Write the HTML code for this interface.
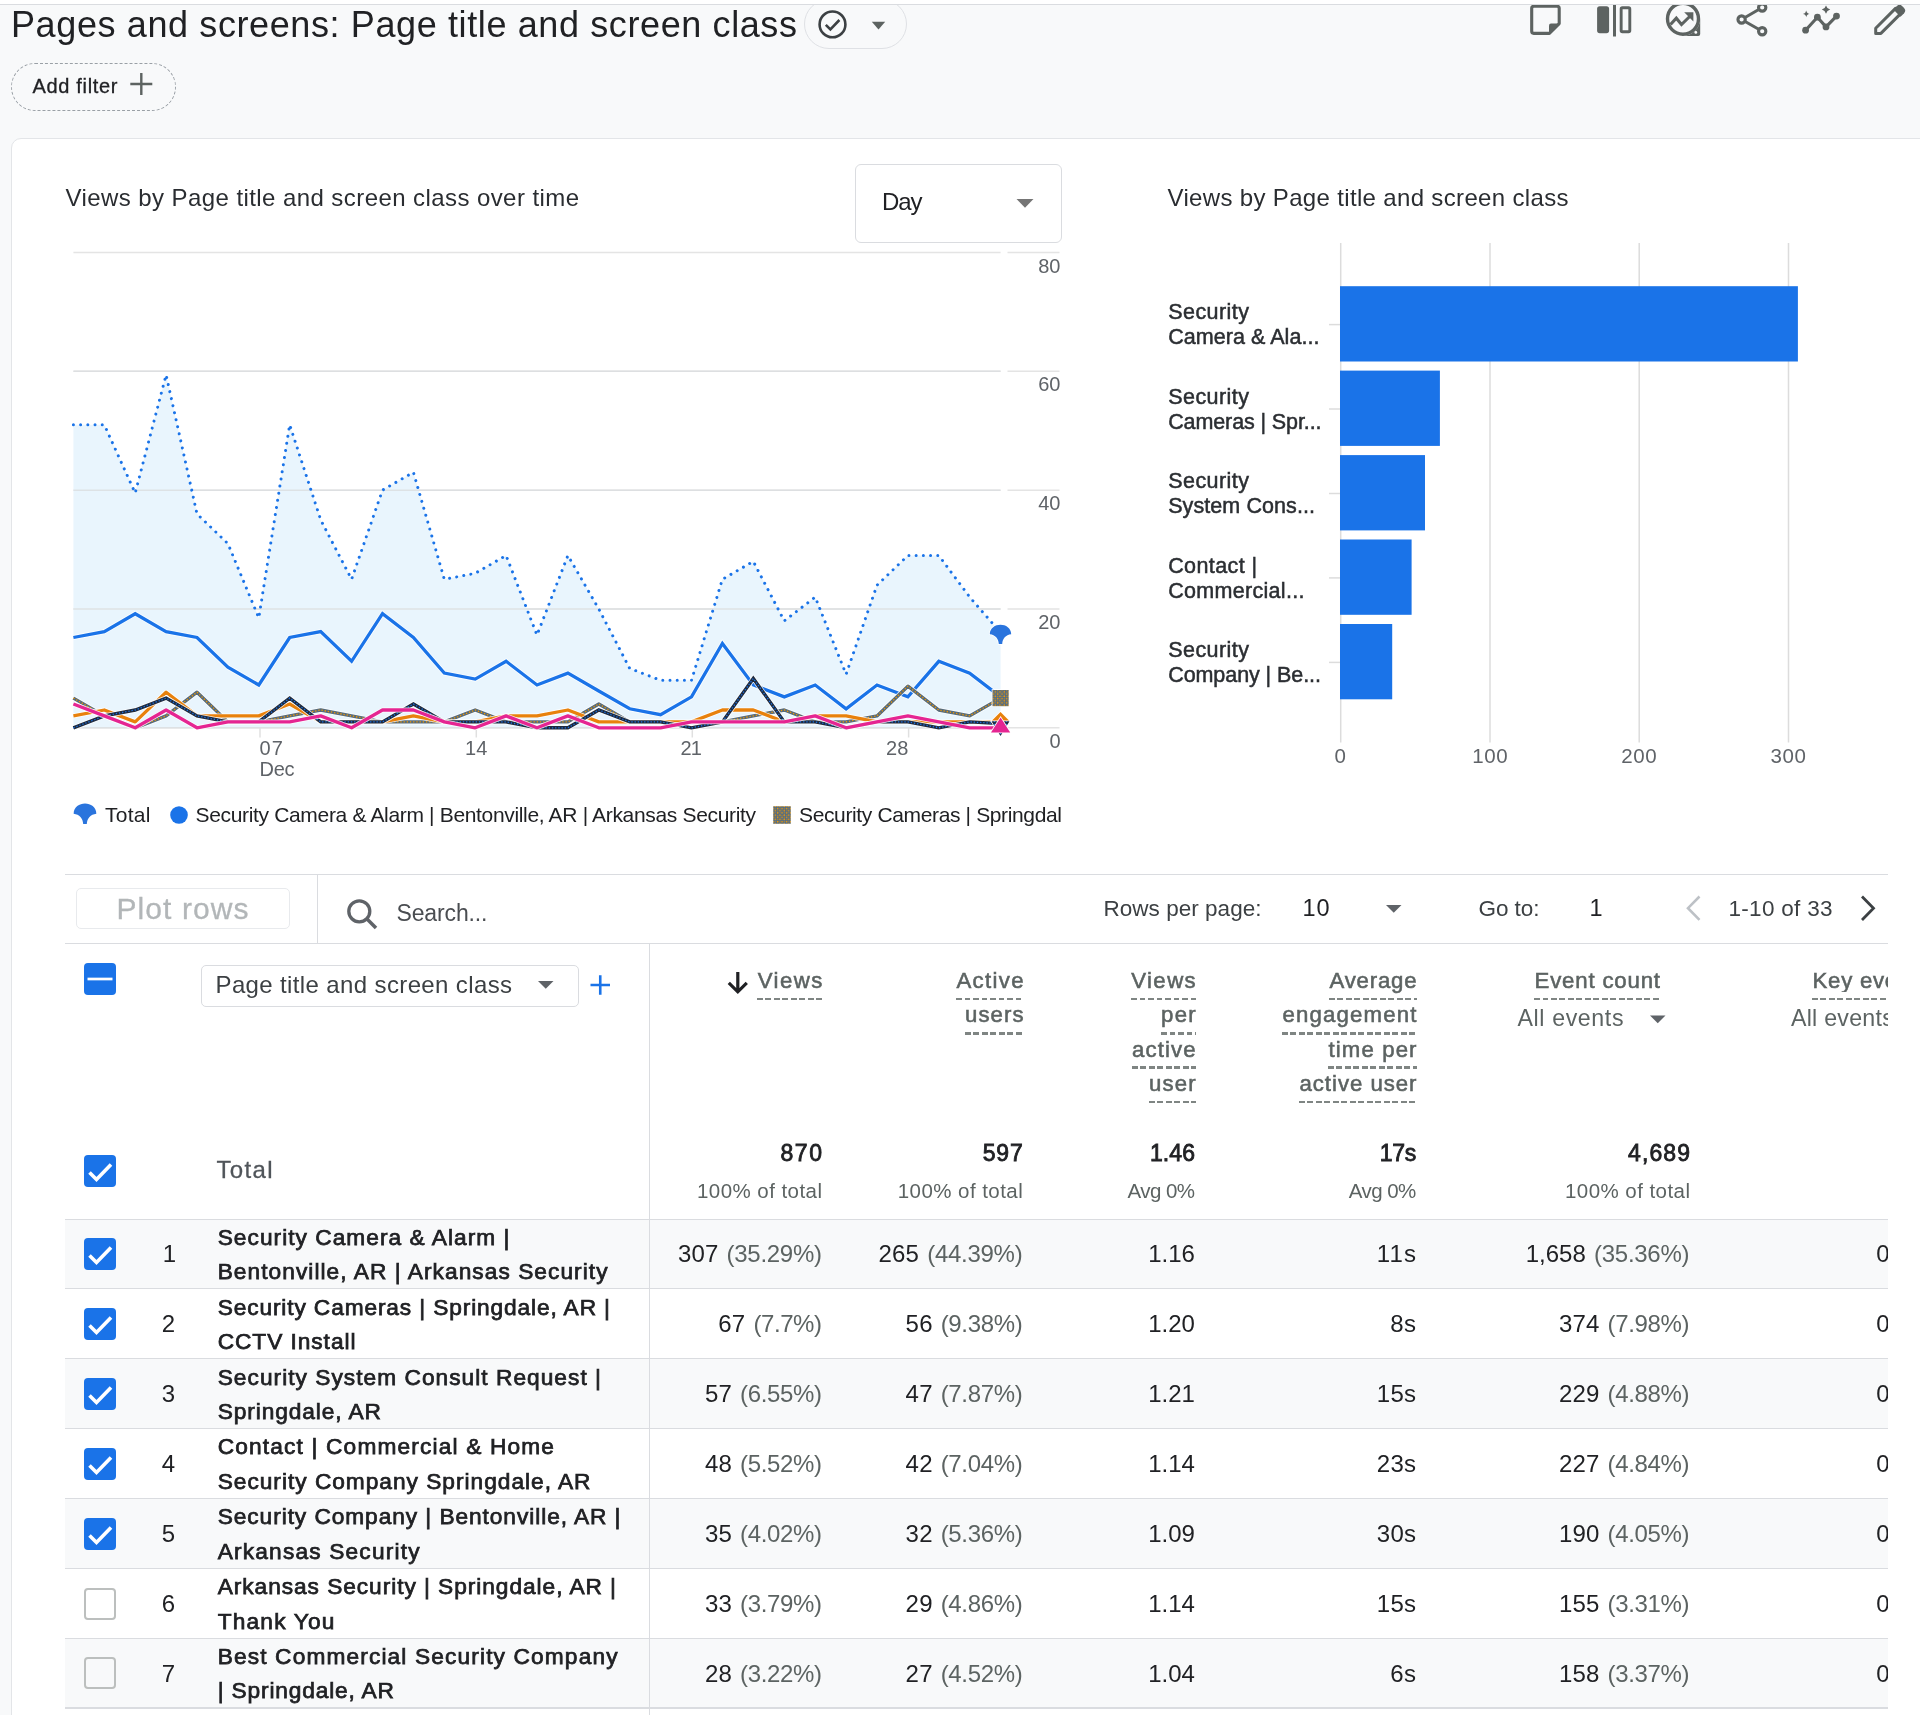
<!DOCTYPE html>
<html><head><meta charset="utf-8"><title>Pages and screens</title>
<style>
*{box-sizing:border-box}
html,body{margin:0;padding:0}
body{width:1920px;height:1715px;overflow:hidden;background:#f8f9fa;font-family:"Liberation Sans",sans-serif;position:relative}
.abs{position:absolute}
.t{position:absolute;white-space:pre;line-height:1;font-family:"Liberation Sans",sans-serif}
.topw{position:absolute;left:0;top:0;width:1920px;height:4px;background:#fff}
.topl{position:absolute;left:0;top:3.5px;width:1920px;height:1.5px;background:#dadce0}
.card{position:absolute;left:11px;top:138px;width:1930px;height:1600px;background:#fff;border:1.5px solid #e3e5e8;border-radius:10px}
.pill{position:absolute;left:804px;top:-1px;width:103px;height:49.5px;border:1.5px solid #dfe1e5;border-radius:25px}
.chip{position:absolute;left:11.3px;top:62.5px;width:164.5px;height:48px;border:1.3px dashed #9aa0a6;border-radius:24px}
.dd{position:absolute;left:855px;top:163.5px;width:206.5px;height:79.5px;border:1.5px solid #dadce0;border-radius:6px;background:#fff}
.hl{position:absolute;height:1.5px;background:#dadce0}
.vl{position:absolute;width:1.5px;background:#dadce0}
.row{position:absolute;left:65px;width:1823.3px;height:69.85px;border-top:1.5px solid #dadce0}
.cb{position:absolute;left:84.2px;width:32px;height:32px;border-radius:4px}
.cb.on{background:#1a73e8}
.cb.on svg{position:absolute;left:0;top:0;width:32px;height:32px}
.cb.off{border:2.5px solid #bcbfbe;background:transparent}
.dash{position:absolute;height:2.7px;background:repeating-linear-gradient(90deg,#7f8583 0 5.8px,transparent 5.8px 8.5px)}
.btn{position:absolute;left:76px;top:887.600px;width:214px;height:41.200px;border:1.5px solid #e8eaed;border-radius:5px;background:#fff}
.sel{position:absolute;left:201px;top:964.5px;width:377.5px;height:42px;border:1.5px solid #dadce0;border-radius:5px;background:#fff}
.tl{position:absolute;left:0;top:0;width:1920px;height:1715px;will-change:transform}
.mask{position:absolute;left:1888.3px;top:860px;width:40px;height:860px;background:#fff}
</style></head>
<body>
<div class="pill"></div>
<div class="chip"></div>
<div class="card"></div>
<div class="dd"></div>
<svg class="abs" style="left:1016px;top:199px" width="18" height="10" viewBox="0 0 18 10"><path d="M0.500 0h17l-8.500 8.800z" fill="#757575"/></svg>
<svg class="abs" style="left:0;top:0" width="1920" height="860" viewBox="0 0 1920 860">
<defs>
<pattern id="pb" width="4.400" height="4.400" patternUnits="userSpaceOnUse"><rect width="4.400" height="4.400" fill="#4d6a88"/><circle cx="1.100" cy="1.100" r="0.800" fill="#f29900"/><circle cx="3.300" cy="3.300" r="0.800" fill="#f29900"/><circle cx="3.300" cy="1.100" r="0.500" fill="#f29900"/><circle cx="1.100" cy="3.300" r="0.500" fill="#f29900"/></pattern>
<pattern id="pn" width="3" height="3" patternUnits="userSpaceOnUse"><rect width="3" height="3" fill="#1f2a3d"/><circle cx="1.500" cy="1.500" r="0.700" fill="#1a73e8"/></pattern>
</defs>
<path d="M73.4 252.5H1000.6M1007.5 252.5H1059.5" stroke="#e4e4e4" stroke-width="1.5"/>
<path d="M73.4 371.3H1000.6M1007.5 371.3H1059.5" stroke="#e4e4e4" stroke-width="1.5"/>
<path d="M73.4 490.2H1000.6M1007.5 490.2H1059.5" stroke="#e4e4e4" stroke-width="1.5"/>
<path d="M73.4 609H1000.6M1007.5 609H1059.5" stroke="#e4e4e4" stroke-width="1.5"/>
<path d="M73.4 727.8H1000.6M1007.5 727.8H1059.5" stroke="#e4e4e4" stroke-width="1.5"/>
<polygon points="73.4,727.8 73.4,424.8 104.3,424.8 135.2,493.1 166.1,374.9 197.0,513.9 227.9,543.6 258.8,617.9 289.7,424.8 320.7,519.9 351.6,579.3 382.5,490.1 413.4,472.3 444.3,579.3 475.2,573.3 506.1,555.5 537.0,635.1 567.9,555.5 598.8,609.0 629.7,668.4 660.6,680.3 691.5,680.3 722.4,579.3 753.3,561.4 784.3,620.9 815.2,597.1 846.1,674.3 877.0,585.2 907.9,555.5 938.8,555.5 969.7,597.1 1000.6,632.7 1000.6,727.8" fill="#e9f5fd"/>
<path d="M73.4 371.3H1000.6" stroke="#dcdfe1" stroke-width="1.5" opacity="0.85"/>
<path d="M73.4 490.2H1000.6" stroke="#dcdfe1" stroke-width="1.5" opacity="0.85"/>
<path d="M73.4 609H1000.6" stroke="#dcdfe1" stroke-width="1.5" opacity="0.85"/>
<path d="M73.4 727.8H1000.6" stroke="#dcdfe1" stroke-width="1.5" opacity="0.85"/>
<path d="M260 728V737.5" stroke="#e0e0e0" stroke-width="1.5"/>
<path d="M476.3 728V737.5" stroke="#e0e0e0" stroke-width="1.5"/>
<path d="M692.3 728V737.5" stroke="#e0e0e0" stroke-width="1.5"/>
<path d="M908.6 728V737.5" stroke="#e0e0e0" stroke-width="1.5"/>
<polyline points="73.4,424.8 104.3,424.8 135.2,493.1 166.1,374.9 197.0,513.9 227.9,543.6 258.8,617.9 289.7,424.8 320.7,519.9 351.6,579.3 382.5,490.1 413.4,472.3 444.3,579.3 475.2,573.3 506.1,555.5 537.0,635.1 567.9,555.5 598.8,609.0 629.7,668.4 660.6,680.3 691.5,680.3 722.4,579.3 753.3,561.4 784.3,620.9 815.2,597.1 846.1,674.3 877.0,585.2 907.9,555.5 938.8,555.5 969.7,597.1 1000.6,632.7" fill="none" stroke="#1a73e8" stroke-width="3" stroke-linecap="round" stroke-dasharray="0.01 7.2" />
<polyline points="73.4,637.5 104.3,631.6 135.2,613.7 166.1,631.6 197.0,637.5 227.9,667.2 258.8,685.0 289.7,637.5 320.7,631.6 351.6,661.3 382.5,613.7 413.4,637.5 444.3,673.1 475.2,679.1 506.1,661.3 537.0,685.0 567.9,673.1 598.8,691.0 629.7,708.8 660.6,714.7 691.5,696.9 722.4,643.4 753.3,685.0 784.3,696.9 815.2,685.0 846.1,708.8 877.0,685.0 907.9,696.9 938.8,661.3 969.7,673.1 1000.6,696.9" fill="none" stroke="#fff" stroke-opacity="0.85" stroke-width="4.9" stroke-linejoin="miter"/>
<polyline points="73.4,637.5 104.3,631.6 135.2,613.7 166.1,631.6 197.0,637.5 227.9,667.2 258.8,685.0 289.7,637.5 320.7,631.6 351.6,661.3 382.5,613.7 413.4,637.5 444.3,673.1 475.2,679.1 506.1,661.3 537.0,685.0 567.9,673.1 598.8,691.0 629.7,708.8 660.6,714.7 691.5,696.9 722.4,643.4 753.3,685.0 784.3,696.9 815.2,685.0 846.1,708.8 877.0,685.0 907.9,696.9 938.8,661.3 969.7,673.1 1000.6,696.9" fill="none" stroke="#1a73e8" stroke-width="3.3" stroke-linejoin="miter"/>
<polyline points="73.4,698.1 104.3,715.9 135.2,727.8 166.1,715.9 197.0,692.2 227.9,721.9 258.8,721.9 289.7,715.9 320.7,710.0 351.6,715.9 382.5,721.9 413.4,721.9 444.3,721.9 475.2,710.0 506.1,721.9 537.0,721.9 567.9,721.9 598.8,704.0 629.7,721.9 660.6,721.9 691.5,727.8 722.4,721.9 753.3,715.9 784.3,710.0 815.2,721.9 846.1,721.9 877.0,715.9 907.9,686.2 938.8,710.0 969.7,715.9 1000.6,698.1" fill="none" stroke="#fff" stroke-opacity="0.85" stroke-width="5.0" stroke-linejoin="round"/>
<polyline points="73.4,698.1 104.3,715.9 135.2,727.8 166.1,715.9 197.0,692.2 227.9,721.9 258.8,721.9 289.7,715.9 320.7,710.0 351.6,715.9 382.5,721.9 413.4,721.9 444.3,721.9 475.2,710.0 506.1,721.9 537.0,721.9 567.9,721.9 598.8,704.0 629.7,721.9 660.6,721.9 691.5,727.8 722.4,721.9 753.3,715.9 784.3,710.0 815.2,721.9 846.1,721.9 877.0,715.9 907.9,686.2 938.8,710.0 969.7,715.9 1000.6,698.1" fill="none" stroke="#566b7c" stroke-width="3.4" stroke-linejoin="round"/>
<polyline points="73.4,698.1 104.3,715.9 135.2,727.8 166.1,715.9 197.0,692.2 227.9,721.9 258.8,721.9 289.7,715.9 320.7,710.0 351.6,715.9 382.5,721.9 413.4,721.9 444.3,721.9 475.2,710.0 506.1,721.9 537.0,721.9 567.9,721.9 598.8,704.0 629.7,721.9 660.6,721.9 691.5,727.8 722.4,721.9 753.3,715.9 784.3,710.0 815.2,721.9 846.1,721.9 877.0,715.9 907.9,686.2 938.8,710.0 969.7,715.9 1000.6,698.1" fill="none" stroke="#f29900" stroke-width="1.3" stroke-dasharray="1.3 1.9" stroke-linejoin="round"/>
<polyline points="73.4,715.9 104.3,710.0 135.2,721.9 166.1,692.2 197.0,715.9 227.9,715.9 258.8,715.9 289.7,704.0 320.7,721.9 351.6,721.9 382.5,721.9 413.4,715.9 444.3,721.9 475.2,721.9 506.1,715.9 537.0,715.9 567.9,710.0 598.8,721.9 629.7,721.9 660.6,721.9 691.5,721.9 722.4,710.0 753.3,710.0 784.3,721.9 815.2,715.9 846.1,715.9 877.0,721.9 907.9,721.9 938.8,721.9 969.7,721.9 1000.6,721.9" fill="none" stroke="#fff" stroke-opacity="0.85" stroke-width="4.9" stroke-linejoin="round"/>
<polyline points="73.4,715.9 104.3,710.0 135.2,721.9 166.1,692.2 197.0,715.9 227.9,715.9 258.8,715.9 289.7,704.0 320.7,721.9 351.6,721.9 382.5,721.9 413.4,715.9 444.3,721.9 475.2,721.9 506.1,715.9 537.0,715.9 567.9,710.0 598.8,721.9 629.7,721.9 660.6,721.9 691.5,721.9 722.4,710.0 753.3,710.0 784.3,721.9 815.2,715.9 846.1,715.9 877.0,721.9 907.9,721.9 938.8,721.9 969.7,721.9 1000.6,721.9" fill="none" stroke="#e8810c" stroke-width="3.3" stroke-linejoin="round"/>
<polyline points="73.4,727.8 104.3,715.9 135.2,710.0 166.1,698.1 197.0,715.9 227.9,721.9 258.8,721.9 289.7,698.1 320.7,721.9 351.6,721.9 382.5,721.9 413.4,704.0 444.3,721.9 475.2,721.9 506.1,721.9 537.0,727.8 567.9,727.8 598.8,710.0 629.7,721.9 660.6,721.9 691.5,727.8 722.4,721.9 753.3,678.5 784.3,721.9 815.2,721.9 846.1,727.8 877.0,721.9 907.9,721.9 938.8,727.8 969.7,721.9 1000.6,723.6" fill="none" stroke="#fff" stroke-opacity="0.85" stroke-width="5.0" stroke-linejoin="miter"/>
<polyline points="73.4,727.8 104.3,715.9 135.2,710.0 166.1,698.1 197.0,715.9 227.9,721.9 258.8,721.9 289.7,698.1 320.7,721.9 351.6,721.9 382.5,721.9 413.4,704.0 444.3,721.9 475.2,721.9 506.1,721.9 537.0,727.8 567.9,727.8 598.8,710.0 629.7,721.9 660.6,721.9 691.5,727.8 722.4,721.9 753.3,678.5 784.3,721.9 815.2,721.9 846.1,727.8 877.0,721.9 907.9,721.9 938.8,727.8 969.7,721.9 1000.6,723.6" fill="none" stroke="#1f2a3d" stroke-width="3.4" stroke-linejoin="miter"/>
<polyline points="73.4,727.8 104.3,715.9 135.2,710.0 166.1,698.1 197.0,715.9 227.9,721.9 258.8,721.9 289.7,698.1 320.7,721.9 351.6,721.9 382.5,721.9 413.4,704.0 444.3,721.9 475.2,721.9 506.1,721.9 537.0,727.8 567.9,727.8 598.8,710.0 629.7,721.9 660.6,721.9 691.5,727.8 722.4,721.9 753.3,678.5 784.3,721.9 815.2,721.9 846.1,727.8 877.0,721.9 907.9,721.9 938.8,727.8 969.7,721.9 1000.6,723.6" fill="none" stroke="#1a73e8" stroke-width="1.3" stroke-dasharray="1.3 1.9" stroke-linejoin="miter"/>
<polyline points="73.4,704.0 104.3,715.9 135.2,727.8 166.1,710.0 197.0,727.8 227.9,721.9 258.8,721.9 289.7,721.9 320.7,715.9 351.6,727.8 382.5,710.0 413.4,710.0 444.3,721.9 475.2,727.8 506.1,715.9 537.0,727.8 567.9,715.9 598.8,727.8 629.7,727.8 660.6,727.8 691.5,721.9 722.4,721.9 753.3,721.9 784.3,721.9 815.2,715.9 846.1,727.8 877.0,721.9 907.9,715.9 938.8,721.9 969.7,727.8 1000.6,727.8" fill="none" stroke="#fff" stroke-opacity="0.85" stroke-width="4.9" stroke-linejoin="round"/>
<polyline points="73.4,704.0 104.3,715.9 135.2,727.8 166.1,710.0 197.0,727.8 227.9,721.9 258.8,721.9 289.7,721.9 320.7,715.9 351.6,727.8 382.5,710.0 413.4,710.0 444.3,721.9 475.2,727.8 506.1,715.9 537.0,727.8 567.9,715.9 598.8,727.8 629.7,727.8 660.6,727.8 691.5,721.9 722.4,721.9 753.3,721.9 784.3,721.9 815.2,715.9 846.1,727.8 877.0,721.9 907.9,715.9 938.8,721.9 969.7,727.8 1000.6,727.8" fill="none" stroke="#e52592" stroke-width="3.3" stroke-linejoin="round"/>
<path transform="translate(1000.5,624.7) scale(1)" d="M-10.7 9.6C-10.7 3.2 -5.2 0 0 0C5.2 0 10.7 3.2 10.7 9.6C5.2 10.2 2 14 1.7 19.2L-1.7 19.2C-2 14 -5.2 10.2 -10.7 9.600Z" fill="#2a74dd" stroke="#fff" stroke-width="1.6" paint-order="stroke"/>
<rect x="992.5" y="690" width="16.2" height="16.2" fill="url(#pb)" stroke="#fff" stroke-width="1.6" paint-order="stroke"/>
<path d="M991.5 721L1000.5 712L1009.5 721L1000.5 730Z" fill="#e8810c" stroke="#fff" stroke-width="1.6" paint-order="stroke"/>
<path d="M991.5 721.3H1009.5L1000.5 736Z" fill="url(#pn)" stroke="#fff" stroke-width="1.6" paint-order="stroke"/>
<path d="M991 732.5H1010.200L1000.6 717.5Z" fill="#e52592" stroke="#fff" stroke-width="1.6" paint-order="stroke"/>
<path transform="translate(85,803.6) scale(1.06)" d="M-10.7 9.6C-10.7 3.2 -5.2 0 0 0C5.2 0 10.7 3.2 10.7 9.6C5.2 10.2 2 14 1.7 19.2L-1.7 19.2C-2 14 -5.2 10.2 -10.7 9.600Z" fill="#2a74dd" />
<circle cx="179" cy="815" r="8.8" fill="#1a73e8"/>
<rect x="773.200" y="806.200" width="17.600" height="17.600" fill="url(#pb)"/>
<path d="M1340.7 243V742.5" stroke="#dcdcdc" stroke-width="1.5"/>
<path d="M1490 243V742.5" stroke="#dcdcdc" stroke-width="1.5"/>
<path d="M1639.2 243V742.5" stroke="#dcdcdc" stroke-width="1.5"/>
<path d="M1788.5 243V742.5" stroke="#dcdcdc" stroke-width="1.5"/>
<rect x="1340" y="286.2" width="457.9" height="75.3" fill="#1a73e8"/>
<path d="M1329 324.6H1340" stroke="#dcdcdc" stroke-width="1.5"/>
<rect x="1340" y="370.6" width="99.9" height="75.3" fill="#1a73e8"/>
<path d="M1329 409.0H1340" stroke="#dcdcdc" stroke-width="1.5"/>
<rect x="1340" y="455.1" width="85.0" height="75.3" fill="#1a73e8"/>
<path d="M1329 493.5H1340" stroke="#dcdcdc" stroke-width="1.5"/>
<rect x="1340" y="539.5" width="71.6" height="75.3" fill="#1a73e8"/>
<path d="M1329 577.9H1340" stroke="#dcdcdc" stroke-width="1.5"/>
<rect x="1340" y="624.0" width="52.2" height="75.3" fill="#1a73e8"/>
<path d="M1329 662.4H1340" stroke="#dcdcdc" stroke-width="1.5"/>
</svg>
<!-- table -->
<div class="hl" style="left:65px;top:873.5px;width:1823.3px"></div>
<div class="hl" style="left:65px;top:942.5px;width:1823.3px"></div>
<div class="vl" style="left:316.5px;top:874px;height:69px"></div>
<div class="btn"></div>
<div class="sel"></div>
<div class="cb on" style="top:962.7px"><svg viewBox="0 0 32 32"><path d="M3.500 16h25" stroke="#fff" stroke-width="2.700"/></svg></div>
<div class="cb on" style="top:1155px"><svg viewBox="0 0 32 32"><path d="M5.500 17.500l7 7L27 9.500" fill="none" stroke="#fff" stroke-width="3.600"/></svg></div>
<div class="dash" style="left:757.3px;top:997.5px;width:65.5px"></div><div class="dash" style="left:956.0px;top:997.5px;width:68.0px"></div><div class="dash" style="left:964.5px;top:1032.0px;width:59.5px"></div><div class="dash" style="left:1130.7px;top:997.5px;width:65.5px"></div><div class="dash" style="left:1160.5px;top:1032.0px;width:35.7px"></div><div class="dash" style="left:1131.5px;top:1066.4px;width:64.7px"></div><div class="dash" style="left:1148.5px;top:1100.8px;width:47.7px"></div><div class="dash" style="left:1329.0px;top:997.5px;width:88.0px"></div><div class="dash" style="left:1282.0px;top:1032.0px;width:135.0px"></div><div class="dash" style="left:1328.0px;top:1066.4px;width:89.0px"></div><div class="dash" style="left:1299.0px;top:1100.8px;width:118.0px"></div><div class="dash" style="left:1534.0px;top:997.5px;width:126.5px"></div><div class="dash" style="left:1812px;top:997.500px;width:76.300px"></div><div class="row" style="top:1218.5px;background:#f8f9fa"></div><div class="cb on" style="top:1238.2px"><svg viewBox="0 0 32 32"><path d="M5.5 17.5l7 7L27 9.5" fill="none" stroke="#fff" stroke-width="3.6"/></svg></div><div class="row" style="top:1288.3px;background:#fff"></div><div class="cb on" style="top:1308.0px"><svg viewBox="0 0 32 32"><path d="M5.5 17.5l7 7L27 9.5" fill="none" stroke="#fff" stroke-width="3.6"/></svg></div><div class="row" style="top:1358.2px;background:#f8f9fa"></div><div class="cb on" style="top:1377.9px"><svg viewBox="0 0 32 32"><path d="M5.5 17.5l7 7L27 9.5" fill="none" stroke="#fff" stroke-width="3.6"/></svg></div><div class="row" style="top:1428.0px;background:#fff"></div><div class="cb on" style="top:1447.8px"><svg viewBox="0 0 32 32"><path d="M5.5 17.5l7 7L27 9.5" fill="none" stroke="#fff" stroke-width="3.6"/></svg></div><div class="row" style="top:1497.9px;background:#f8f9fa"></div><div class="cb on" style="top:1517.6px"><svg viewBox="0 0 32 32"><path d="M5.5 17.5l7 7L27 9.5" fill="none" stroke="#fff" stroke-width="3.6"/></svg></div><div class="row" style="top:1567.8px;background:#fff"></div><div class="cb off" style="top:1587.5px"></div><div class="row" style="top:1637.6px;background:#f8f9fa"></div><div class="cb off" style="top:1657.3px"></div>
<div class="hl" style="left:65px;top:1707.450px;width:1823.300px"></div>
<div class="vl" style="left:648.7px;top:943px;height:780px"></div>

<svg class="abs" style="left:0;top:860px" width="1920" height="200" viewBox="0 860 1920 200" fill="none">
<!-- search -->
<circle cx="359.300" cy="911.300" r="10.500" stroke="#5f6368" stroke-width="3.300"/>
<path d="M366.800 918.800l9.200 9.200" stroke="#5f6368" stroke-width="3.500"/>
<!-- arrows -->
<path d="M1386 905h15.500l-7.750 7.800z" fill="#5f6368"/>
<path d="M1699.500 896.500l-11.500 11.700l11.500 11.700" stroke="#bdc1c6" stroke-width="2.600"/>
<path d="M1862 896.500l11.500 11.700l-11.500 11.700" stroke="#3c4043" stroke-width="2.800"/>
<path d="M538 981h15.500l-7.750 7.800z" fill="#5f6368"/>
<path d="M590.500 985h19.500M600.250 975.250v19.500" stroke="#1a73e8" stroke-width="2.600"/>
<path d="M737.800 972v19.800M728.800 982.800l9 9l9-9" stroke="#202124" stroke-width="3.200"/>
<path d="M1650 1015.500h15.500l-7.750 7.800z" fill="#5f6368"/>
</svg>


<svg class="abs" style="left:0;top:0" width="1920" height="130" viewBox="0 0 1920 130" fill="none" stroke="#5d6361">
<!-- check circle -->
<circle cx="832.5" cy="24.4" r="12.9" stroke="#3c4043" stroke-width="2.6"/>
<path d="M825.8 24.8l4.6 4.6l9-9.4" stroke="#3c4043" stroke-width="2.6"/>
<path d="M871.8 21.8h13.4l-6.7 7.6z" fill="#5d6361" stroke="none"/>
<!-- plus add filter -->
<path d="M130.300 84h22M141.300 73v22" stroke="#5d6361" stroke-width="2.400"/>
<!-- note -->
<path d="M1533.700 6.250h23.500q2 0 2 2v15.300l-9.800 9.800h-15.700q-2 0-2-2v-23.100q0-2 2-2z" stroke-width="3.100" stroke-linejoin="round"/>
<path d="M1549 34v-8.600q0-2 2-2h8.800z" fill="#5d6361" stroke="none"/>
<!-- compare -->
<rect x="1597.100" y="6.250" width="12" height="26.900" rx="2.600" fill="#5d6361" stroke="none"/>
<path d="M1614.500 3v33.500" stroke-width="3"/>
<rect x="1621.150" y="7.700" width="8.650" height="24" rx="1.200" stroke-width="2.900"/>
<!-- insights circle -->
<circle cx="1683" cy="18.700" r="15.500" stroke-width="3.400"/>
<path d="M1683 35.900H1698.200q2 0 2-2V18.700A17.200 17.200 0 0 1 1683 35.900Z" fill="#5d6361" stroke="none"/>
<circle cx="1695.800" cy="32.400" r="1.400" fill="#fff" stroke="none"/>
<path d="M1670.500 24.500l5.800-6.300l5.200 6.300l8.700-8.500" stroke-width="3.100"/>
<path d="M1684.200 12.300h9.200v9.200z" fill="#5d6361" stroke="none"/>
<!-- share -->
<path d="M1741.600 19.500l20.600-12M1741.600 19.500l20.600 11.750" stroke-width="3.100"/>
<circle cx="1741.600" cy="19.500" r="3.650" stroke-width="3.100" fill="#f8f9fa"/>
<circle cx="1762.200" cy="7.500" r="3.650" stroke-width="3.100" fill="#f8f9fa"/>
<circle cx="1762.200" cy="31.250" r="3.650" stroke-width="3.100" fill="#f8f9fa"/>
<!-- sparkline -->
<path d="M1805.600 30.200l11.800-13l8.600 9.700l10.500-10.800" stroke-width="3.100" stroke-linejoin="round"/>
<circle cx="1805.600" cy="30.200" r="3.400" fill="#5d6361" stroke="none"/>
<circle cx="1817.400" cy="17.200" r="3.400" fill="#5d6361" stroke="none"/>
<circle cx="1826" cy="26.900" r="3.400" fill="#5d6361" stroke="none"/>
<circle cx="1836.500" cy="16.100" r="3.400" fill="#5d6361" stroke="none"/>
<path d="M1826 5.400q0.900 3.300 4.200 4.200q-3.300 0.900-4.200 4.200q-0.900-3.300-4.200-4.200q3.300-0.900 4.200-4.200z" fill="#5d6361" stroke="none"/>
<path d="M1806.250 10.600q0.400 2.900 3.300 3.300q-2.900 0.400-3.300 3.300q-0.400-2.900-3.300-3.300q2.900-0.400 3.300-3.300z" fill="#5d6361" stroke="none"/>
<!-- pencil -->
<path d="M1875.700 33.400v-5.200l19.800-19.800l5.200 5.200l-19.800 19.800z" stroke-width="3" stroke-linejoin="round"/>
<path d="M1893.300 9.600l3.600-3.600q2.600-2.400 5.400 0.200l1.600 1.600q2.600 2.800 0.200 5.400l-3.600 3.600z" fill="#5d6361" stroke="none"/>
</svg>

<div class="topw"></div><div class="topl"></div>
<div class="tl">
<span class="t" style="left:11.0px;top:6.5px;font-size:36px;color:#202124;letter-spacing:0.612px;">Pages and screens: Page title and screen class</span>
<span class="t" style="left:32.5px;top:76.1px;font-size:20px;color:#202124;letter-spacing:0.674px;-webkit-text-stroke:0.3px #202124;">Add filter</span>
<span class="t" style="left:65.5px;top:185.9px;font-size:24px;color:#2a2d31;letter-spacing:0.423px;">Views by Page title and screen class over time</span>
<span class="t" style="left:1167.5px;top:185.9px;font-size:24px;color:#2a2d31;letter-spacing:0.340px;">Views by Page title and screen class</span>
<span class="t" style="left:882.0px;top:190.3px;font-size:24px;color:#202124;letter-spacing:-1.094px;">Day</span>
<span class="t" style="left:1038.2px;top:255.6px;font-size:20px;color:#5f6368;">80</span>
<span class="t" style="left:1038.2px;top:374.4px;font-size:20px;color:#5f6368;">60</span>
<span class="t" style="left:1038.2px;top:493.3px;font-size:20px;color:#5f6368;">40</span>
<span class="t" style="left:1038.2px;top:612.1px;font-size:20px;color:#5f6368;">20</span>
<span class="t" style="left:1049.4px;top:730.9px;font-size:20px;color:#5f6368;">0</span>
<span class="t" style="left:259.5px;top:738.3px;font-size:20px;color:#5f6368;letter-spacing:1.250px;">07</span>
<span class="t" style="left:259.5px;top:758.5px;font-size:20px;color:#5f6368;letter-spacing:-0.289px;">Dec</span>
<span class="t" style="left:465.0px;top:738.3px;font-size:20px;color:#5f6368;letter-spacing:0.250px;">14</span>
<span class="t" style="left:680.5px;top:738.3px;font-size:20px;color:#5f6368;letter-spacing:-0.750px;">21</span>
<span class="t" style="left:886.0px;top:738.3px;font-size:20px;color:#5f6368;letter-spacing:0.250px;">28</span>
<span class="t" style="left:105.0px;top:804.2px;font-size:21px;color:#202124;letter-spacing:0.285px;">Total</span>
<span class="t" style="left:195.5px;top:804.2px;font-size:21px;color:#202124;letter-spacing:-0.333px;">Security Camera &amp; Alarm | Bentonville, AR | Arkansas Security</span>
<span class="t" style="left:799.0px;top:804.2px;font-size:21px;color:#202124;letter-spacing:-0.361px;">Security Cameras | Springdal</span>
<span class="t" style="left:1168.2px;top:302.3px;font-size:21.5px;color:#2b2e32;letter-spacing:0.447px;-webkit-text-stroke:0.5px #2b2e32;">Security</span>
<span class="t" style="left:1168.2px;top:327.1px;font-size:21.5px;color:#2b2e32;letter-spacing:0.052px;-webkit-text-stroke:0.5px #2b2e32;">Camera &amp; Ala...</span>
<span class="t" style="left:1168.2px;top:386.8px;font-size:21.5px;color:#2b2e32;letter-spacing:0.447px;-webkit-text-stroke:0.5px #2b2e32;">Security</span>
<span class="t" style="left:1168.2px;top:411.6px;font-size:21.5px;color:#2b2e32;letter-spacing:-0.110px;-webkit-text-stroke:0.5px #2b2e32;">Cameras | Spr...</span>
<span class="t" style="left:1168.2px;top:471.2px;font-size:21.5px;color:#2b2e32;letter-spacing:0.447px;-webkit-text-stroke:0.5px #2b2e32;">Security</span>
<span class="t" style="left:1168.2px;top:496.0px;font-size:21.5px;color:#2b2e32;letter-spacing:0.080px;-webkit-text-stroke:0.5px #2b2e32;">System Cons...</span>
<span class="t" style="left:1168.2px;top:555.7px;font-size:21.5px;color:#2b2e32;letter-spacing:0.393px;-webkit-text-stroke:0.5px #2b2e32;">Contact |</span>
<span class="t" style="left:1168.2px;top:580.5px;font-size:21.5px;color:#2b2e32;letter-spacing:0.308px;-webkit-text-stroke:0.5px #2b2e32;">Commercial...</span>
<span class="t" style="left:1168.2px;top:640.1px;font-size:21.5px;color:#2b2e32;letter-spacing:0.447px;-webkit-text-stroke:0.5px #2b2e32;">Security</span>
<span class="t" style="left:1168.2px;top:664.9px;font-size:21.5px;color:#2b2e32;letter-spacing:-0.069px;-webkit-text-stroke:0.5px #2b2e32;">Company | Be...</span>
<span class="t" style="left:1334.5px;top:746.4px;font-size:20.5px;color:#5f6368;">0</span>
<span class="t" style="left:1472.2px;top:746.4px;font-size:20.5px;color:#5f6368;letter-spacing:0.641px;">100</span>
<span class="t" style="left:1621.2px;top:746.4px;font-size:20.5px;color:#5f6368;letter-spacing:0.641px;">200</span>
<span class="t" style="left:1770.5px;top:746.4px;font-size:20.5px;color:#5f6368;letter-spacing:0.641px;">300</span>
<span class="t" style="left:116.5px;top:893.8px;font-size:30px;color:#b2b6b8;letter-spacing:1.078px;-webkit-text-stroke:0.3px #b2b6b8;">Plot rows</span>
<span class="t" style="left:396.5px;top:902.1px;font-size:23px;color:#4a4d51;letter-spacing:-0.131px;">Search...</span>
<span class="t" style="left:1103.5px;top:897.5px;font-size:22.5px;color:#3c4043;letter-spacing:0.031px;">Rows per page:</span>
<span class="t" style="left:1302.5px;top:896.6px;font-size:23.5px;color:#202124;letter-spacing:0.859px;">10</span>
<span class="t" style="left:1478.5px;top:897.5px;font-size:22.5px;color:#3c4043;letter-spacing:-0.059px;">Go to:</span>
<span class="t" style="left:1589.5px;top:896.6px;font-size:23.5px;color:#202124;">1</span>
<span class="t" style="left:1728.5px;top:897.5px;font-size:22.5px;color:#3c4043;letter-spacing:0.297px;">1-10 of 33</span>
<span class="t" style="left:215.5px;top:973.0px;font-size:24px;color:#3c4043;letter-spacing:0.372px;">Page title and screen class</span>
<span class="t" style="left:757.8px;top:969.6px;font-size:22.2px;color:#5c6362;letter-spacing:1.426px;-webkit-text-stroke:0.55px #5c6362;">Views</span>
<span class="t" style="left:956.5px;top:969.6px;font-size:22.2px;color:#5c6362;letter-spacing:1.316px;-webkit-text-stroke:0.55px #5c6362;">Active</span>
<span class="t" style="left:965.0px;top:1004.1px;font-size:22.2px;color:#5c6362;letter-spacing:1.059px;-webkit-text-stroke:0.55px #5c6362;">users</span>
<span class="t" style="left:1131.2px;top:969.6px;font-size:22.2px;color:#5c6362;letter-spacing:1.426px;-webkit-text-stroke:0.55px #5c6362;">Views</span>
<span class="t" style="left:1161.0px;top:1004.1px;font-size:22.2px;color:#5c6362;letter-spacing:1.311px;-webkit-text-stroke:0.55px #5c6362;">per</span>
<span class="t" style="left:1132.0px;top:1038.5px;font-size:22.2px;color:#5c6362;letter-spacing:1.146px;-webkit-text-stroke:0.55px #5c6362;">active</span>
<span class="t" style="left:1149.0px;top:1073.0px;font-size:22.2px;color:#5c6362;letter-spacing:1.176px;-webkit-text-stroke:0.55px #5c6362;">user</span>
<span class="t" style="left:1329.5px;top:969.6px;font-size:22.2px;color:#5c6362;letter-spacing:0.792px;-webkit-text-stroke:0.55px #5c6362;">Average</span>
<span class="t" style="left:1282.5px;top:1004.1px;font-size:22.2px;color:#5c6362;letter-spacing:1.181px;-webkit-text-stroke:0.55px #5c6362;">engagement</span>
<span class="t" style="left:1328.5px;top:1038.5px;font-size:22.2px;color:#5c6362;letter-spacing:1.121px;-webkit-text-stroke:0.55px #5c6362;">time per</span>
<span class="t" style="left:1299.5px;top:1073.0px;font-size:22.2px;color:#5c6362;letter-spacing:0.970px;-webkit-text-stroke:0.55px #5c6362;">active user</span>
<span class="t" style="left:1534.5px;top:969.6px;font-size:22.2px;color:#5c6362;letter-spacing:0.831px;-webkit-text-stroke:0.55px #5c6362;">Event count</span>
<span class="t" style="left:1517.5px;top:1007.2px;font-size:23.2px;color:#5c6362;letter-spacing:0.608px;">All events</span>
<span class="t" style="left:1812.5px;top:969.6px;font-size:22.2px;color:#5c6362;-webkit-text-stroke:0.55px #5c6362;width:75.5px;overflow:hidden;letter-spacing:0.75px;">Key events</span>
<span class="t" style="left:1791.0px;top:1007.2px;font-size:23.2px;color:#5c6362;width:97.3px;overflow:hidden;letter-spacing:0.25px;">All events</span>
<span class="t" style="left:216.5px;top:1158.4px;font-size:24px;color:#50555a;letter-spacing:1.324px;-webkit-text-stroke:0.3px #50555a;">Total</span>
<span class="t" style="left:780.5px;top:1141.7px;font-size:23px;color:#202124;letter-spacing:1.562px;-webkit-text-stroke:0.8px #202124;">870</span>
<span class="t" style="left:697.0px;top:1181.1px;font-size:20.5px;color:#5c6362;letter-spacing:0.444px;">100% of total</span>
<span class="t" style="left:982.7px;top:1141.7px;font-size:23px;color:#202124;letter-spacing:0.812px;-webkit-text-stroke:0.8px #202124;">597</span>
<span class="t" style="left:897.7px;top:1181.1px;font-size:20.5px;color:#5c6362;letter-spacing:0.444px;">100% of total</span>
<span class="t" style="left:1150.0px;top:1141.7px;font-size:23px;color:#202124;letter-spacing:0.078px;-webkit-text-stroke:0.8px #202124;">1.46</span>
<span class="t" style="left:1127.5px;top:1181.1px;font-size:20.5px;color:#5c6362;letter-spacing:-0.556px;">Avg 0%</span>
<span class="t" style="left:1379.8px;top:1141.7px;font-size:23px;color:#202124;letter-spacing:-0.297px;-webkit-text-stroke:0.8px #202124;">17s</span>
<span class="t" style="left:1348.8px;top:1181.1px;font-size:20.5px;color:#5c6362;letter-spacing:-0.556px;">Avg 0%</span>
<span class="t" style="left:1628.0px;top:1141.7px;font-size:23px;color:#202124;letter-spacing:1.109px;-webkit-text-stroke:0.8px #202124;">4,689</span>
<span class="t" style="left:1565.0px;top:1181.1px;font-size:20.5px;color:#5c6362;letter-spacing:0.444px;">100% of total</span>
<span class="t" style="left:162.8px;top:1242.4px;font-size:24px;color:#202124;">1</span>
<span class="t" style="left:217.7px;top:1225.9px;font-size:22.7px;color:#202124;letter-spacing:1.038px;-webkit-text-stroke:0.75px #202124;">Security Camera &amp; Alarm |</span>
<span class="t" style="left:217.7px;top:1260.3px;font-size:22.7px;color:#202124;letter-spacing:1.055px;-webkit-text-stroke:0.75px #202124;">Bentonville, AR | Arkansas Security</span>
<span class="t" style="left:726.5px;top:1242.4px;font-size:24px;color:#5c6362;letter-spacing:-0.270px;">(35.29%)</span>
<span class="t" style="left:677.9px;top:1242.4px;font-size:24px;color:#202124;letter-spacing:0.152px;">307</span>
<span class="t" style="left:927.2px;top:1242.4px;font-size:24px;color:#5c6362;letter-spacing:-0.270px;">(44.39%)</span>
<span class="t" style="left:878.6px;top:1242.4px;font-size:24px;color:#202124;letter-spacing:0.152px;">265</span>
<span class="t" style="left:1594.0px;top:1242.4px;font-size:24px;color:#5c6362;letter-spacing:-0.270px;">(35.36%)</span>
<span class="t" style="left:1525.7px;top:1242.4px;font-size:24px;color:#202124;letter-spacing:0.009px;">1,658</span>
<span class="t" style="left:1148.3px;top:1242.4px;font-size:24px;color:#202124;letter-spacing:-0.023px;">1.16</span>
<span class="t" style="left:1376.8px;top:1242.4px;font-size:24px;color:#202124;letter-spacing:1.139px;">11s</span>
<span class="t" style="left:1876.3px;top:1242.4px;font-size:24px;color:#202124;width:12px;overflow:hidden;">0</span>
<span class="t" style="left:161.8px;top:1312.2px;font-size:24px;color:#202124;">2</span>
<span class="t" style="left:217.7px;top:1295.7px;font-size:22.7px;color:#202124;letter-spacing:0.881px;-webkit-text-stroke:0.75px #202124;">Security Cameras | Springdale, AR |</span>
<span class="t" style="left:217.7px;top:1330.1px;font-size:22.7px;color:#202124;letter-spacing:0.951px;-webkit-text-stroke:0.75px #202124;">CCTV Install</span>
<span class="t" style="left:753.4px;top:1312.2px;font-size:24px;color:#5c6362;letter-spacing:-0.417px;">(7.7%)</span>
<span class="t" style="left:718.3px;top:1312.2px;font-size:24px;color:#202124;letter-spacing:0.197px;">67</span>
<span class="t" style="left:940.7px;top:1312.2px;font-size:24px;color:#5c6362;letter-spacing:-0.333px;">(9.38%)</span>
<span class="t" style="left:905.6px;top:1312.2px;font-size:24px;color:#202124;letter-spacing:0.197px;">56</span>
<span class="t" style="left:1607.5px;top:1312.2px;font-size:24px;color:#5c6362;letter-spacing:-0.333px;">(7.98%)</span>
<span class="t" style="left:1558.9px;top:1312.2px;font-size:24px;color:#202124;letter-spacing:0.152px;">374</span>
<span class="t" style="left:1148.3px;top:1312.2px;font-size:24px;color:#202124;letter-spacing:-0.023px;">1.20</span>
<span class="t" style="left:1390.2px;top:1312.2px;font-size:24px;color:#202124;letter-spacing:0.391px;">8s</span>
<span class="t" style="left:1876.3px;top:1312.2px;font-size:24px;color:#202124;width:12px;overflow:hidden;">0</span>
<span class="t" style="left:161.8px;top:1382.1px;font-size:24px;color:#202124;">3</span>
<span class="t" style="left:217.7px;top:1365.6px;font-size:22.7px;color:#202124;letter-spacing:1.036px;-webkit-text-stroke:0.75px #202124;">Security System Consult Request |</span>
<span class="t" style="left:217.7px;top:1400.0px;font-size:22.7px;color:#202124;letter-spacing:0.919px;-webkit-text-stroke:0.75px #202124;">Springdale, AR</span>
<span class="t" style="left:740.0px;top:1382.1px;font-size:24px;color:#5c6362;letter-spacing:-0.333px;">(6.55%)</span>
<span class="t" style="left:704.9px;top:1382.1px;font-size:24px;color:#202124;letter-spacing:0.197px;">57</span>
<span class="t" style="left:940.7px;top:1382.1px;font-size:24px;color:#5c6362;letter-spacing:-0.333px;">(7.87%)</span>
<span class="t" style="left:905.6px;top:1382.1px;font-size:24px;color:#202124;letter-spacing:0.197px;">47</span>
<span class="t" style="left:1607.5px;top:1382.1px;font-size:24px;color:#5c6362;letter-spacing:-0.333px;">(4.88%)</span>
<span class="t" style="left:1558.9px;top:1382.1px;font-size:24px;color:#202124;letter-spacing:0.152px;">229</span>
<span class="t" style="left:1148.3px;top:1382.1px;font-size:24px;color:#202124;letter-spacing:-0.023px;">1.21</span>
<span class="t" style="left:1376.8px;top:1382.1px;font-size:24px;color:#202124;letter-spacing:0.248px;">15s</span>
<span class="t" style="left:1876.3px;top:1382.1px;font-size:24px;color:#202124;width:12px;overflow:hidden;">0</span>
<span class="t" style="left:161.8px;top:1451.9px;font-size:24px;color:#202124;">4</span>
<span class="t" style="left:217.7px;top:1435.4px;font-size:22.7px;color:#202124;letter-spacing:1.167px;-webkit-text-stroke:0.75px #202124;">Contact | Commercial &amp; Home</span>
<span class="t" style="left:217.7px;top:1469.8px;font-size:22.7px;color:#202124;letter-spacing:0.993px;-webkit-text-stroke:0.75px #202124;">Security Company Springdale, AR</span>
<span class="t" style="left:740.0px;top:1451.9px;font-size:24px;color:#5c6362;letter-spacing:-0.333px;">(5.52%)</span>
<span class="t" style="left:704.9px;top:1451.9px;font-size:24px;color:#202124;letter-spacing:0.197px;">48</span>
<span class="t" style="left:940.7px;top:1451.9px;font-size:24px;color:#5c6362;letter-spacing:-0.333px;">(7.04%)</span>
<span class="t" style="left:905.6px;top:1451.9px;font-size:24px;color:#202124;letter-spacing:0.197px;">42</span>
<span class="t" style="left:1607.5px;top:1451.9px;font-size:24px;color:#5c6362;letter-spacing:-0.333px;">(4.84%)</span>
<span class="t" style="left:1558.9px;top:1451.9px;font-size:24px;color:#202124;letter-spacing:0.152px;">227</span>
<span class="t" style="left:1148.3px;top:1451.9px;font-size:24px;color:#202124;letter-spacing:-0.023px;">1.14</span>
<span class="t" style="left:1376.8px;top:1451.9px;font-size:24px;color:#202124;letter-spacing:0.248px;">23s</span>
<span class="t" style="left:1876.3px;top:1451.9px;font-size:24px;color:#202124;width:12px;overflow:hidden;">0</span>
<span class="t" style="left:161.8px;top:1521.8px;font-size:24px;color:#202124;">5</span>
<span class="t" style="left:217.7px;top:1505.3px;font-size:22.7px;color:#202124;letter-spacing:0.939px;-webkit-text-stroke:0.75px #202124;">Security Company | Bentonville, AR |</span>
<span class="t" style="left:217.7px;top:1539.7px;font-size:22.7px;color:#202124;letter-spacing:1.185px;-webkit-text-stroke:0.75px #202124;">Arkansas Security</span>
<span class="t" style="left:740.0px;top:1521.8px;font-size:24px;color:#5c6362;letter-spacing:-0.333px;">(4.02%)</span>
<span class="t" style="left:704.9px;top:1521.8px;font-size:24px;color:#202124;letter-spacing:0.197px;">35</span>
<span class="t" style="left:940.7px;top:1521.8px;font-size:24px;color:#5c6362;letter-spacing:-0.333px;">(5.36%)</span>
<span class="t" style="left:905.6px;top:1521.8px;font-size:24px;color:#202124;letter-spacing:0.197px;">32</span>
<span class="t" style="left:1607.5px;top:1521.8px;font-size:24px;color:#5c6362;letter-spacing:-0.333px;">(4.05%)</span>
<span class="t" style="left:1558.9px;top:1521.8px;font-size:24px;color:#202124;letter-spacing:0.152px;">190</span>
<span class="t" style="left:1148.3px;top:1521.8px;font-size:24px;color:#202124;letter-spacing:-0.023px;">1.09</span>
<span class="t" style="left:1376.8px;top:1521.8px;font-size:24px;color:#202124;letter-spacing:0.248px;">30s</span>
<span class="t" style="left:1876.3px;top:1521.8px;font-size:24px;color:#202124;width:12px;overflow:hidden;">0</span>
<span class="t" style="left:161.8px;top:1591.6px;font-size:24px;color:#202124;">6</span>
<span class="t" style="left:217.7px;top:1575.1px;font-size:22.7px;color:#202124;letter-spacing:0.955px;-webkit-text-stroke:0.75px #202124;">Arkansas Security | Springdale, AR |</span>
<span class="t" style="left:217.7px;top:1609.5px;font-size:22.7px;color:#202124;letter-spacing:1.196px;-webkit-text-stroke:0.75px #202124;">Thank You</span>
<span class="t" style="left:740.0px;top:1591.6px;font-size:24px;color:#5c6362;letter-spacing:-0.333px;">(3.79%)</span>
<span class="t" style="left:704.9px;top:1591.6px;font-size:24px;color:#202124;letter-spacing:0.197px;">33</span>
<span class="t" style="left:940.7px;top:1591.6px;font-size:24px;color:#5c6362;letter-spacing:-0.333px;">(4.86%)</span>
<span class="t" style="left:905.6px;top:1591.6px;font-size:24px;color:#202124;letter-spacing:0.197px;">29</span>
<span class="t" style="left:1607.5px;top:1591.6px;font-size:24px;color:#5c6362;letter-spacing:-0.333px;">(3.31%)</span>
<span class="t" style="left:1558.9px;top:1591.6px;font-size:24px;color:#202124;letter-spacing:0.152px;">155</span>
<span class="t" style="left:1148.3px;top:1591.6px;font-size:24px;color:#202124;letter-spacing:-0.023px;">1.14</span>
<span class="t" style="left:1376.8px;top:1591.6px;font-size:24px;color:#202124;letter-spacing:0.248px;">15s</span>
<span class="t" style="left:1876.3px;top:1591.6px;font-size:24px;color:#202124;width:12px;overflow:hidden;">0</span>
<span class="t" style="left:161.8px;top:1661.5px;font-size:24px;color:#202124;">7</span>
<span class="t" style="left:217.7px;top:1645.0px;font-size:22.7px;color:#202124;letter-spacing:1.143px;-webkit-text-stroke:0.75px #202124;">Best Commercial Security Company</span>
<span class="t" style="left:217.7px;top:1679.4px;font-size:22.7px;color:#202124;letter-spacing:0.850px;-webkit-text-stroke:0.75px #202124;">| Springdale, AR</span>
<span class="t" style="left:740.0px;top:1661.5px;font-size:24px;color:#5c6362;letter-spacing:-0.333px;">(3.22%)</span>
<span class="t" style="left:704.9px;top:1661.5px;font-size:24px;color:#202124;letter-spacing:0.197px;">28</span>
<span class="t" style="left:940.7px;top:1661.5px;font-size:24px;color:#5c6362;letter-spacing:-0.333px;">(4.52%)</span>
<span class="t" style="left:905.6px;top:1661.5px;font-size:24px;color:#202124;letter-spacing:0.197px;">27</span>
<span class="t" style="left:1607.5px;top:1661.5px;font-size:24px;color:#5c6362;letter-spacing:-0.333px;">(3.37%)</span>
<span class="t" style="left:1558.9px;top:1661.5px;font-size:24px;color:#202124;letter-spacing:0.152px;">158</span>
<span class="t" style="left:1148.3px;top:1661.5px;font-size:24px;color:#202124;letter-spacing:-0.023px;">1.04</span>
<span class="t" style="left:1390.2px;top:1661.5px;font-size:24px;color:#202124;letter-spacing:0.391px;">6s</span>
<span class="t" style="left:1876.3px;top:1661.5px;font-size:24px;color:#202124;width:12px;overflow:hidden;">0</span>
</div>
<div class="mask"></div>
</body></html>
